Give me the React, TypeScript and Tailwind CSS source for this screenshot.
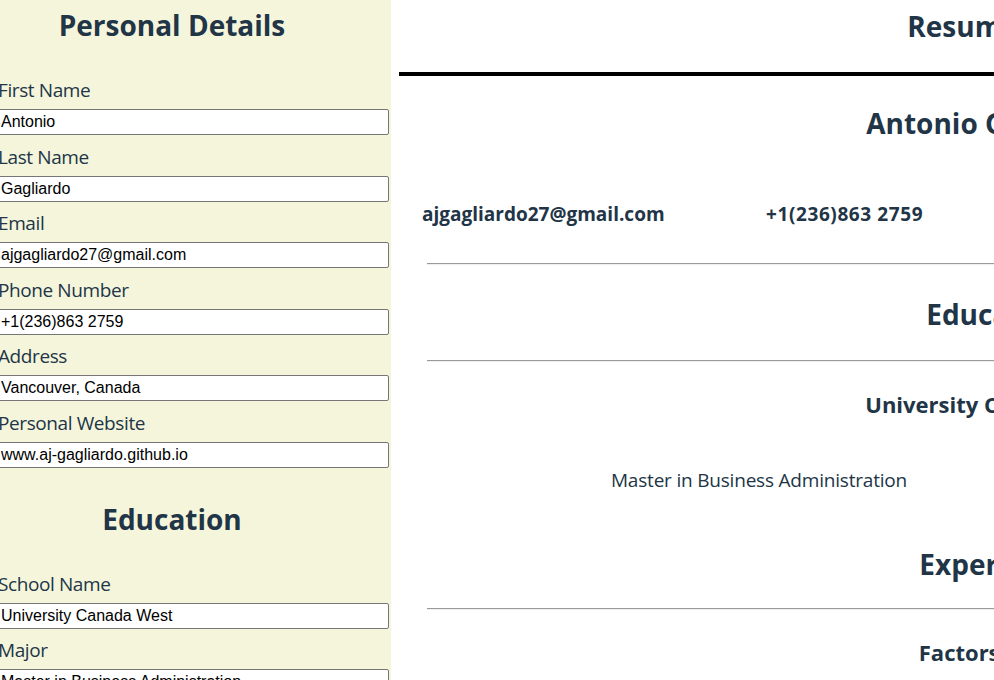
import { useState } from "react";

const personalFields = [
  { id: "firstName", label: "First Name", value: "Antonio" },
  { id: "lastName", label: "Last Name", value: "Gagliardo" },
  { id: "email", label: "Email", value: "ajgagliardo27@gmail.com" },
  { id: "phone", label: "Phone Number", value: "+1(236)863 2759" },
  { id: "address", label: "Address", value: "Vancouver, Canada" },
  { id: "website", label: "Personal Website", value: "www.aj-gagliardo.github.io" },
];

const educationFields = [
  { id: "school", label: "School Name", value: "University Canada West" },
  { id: "major", label: "Major", value: "Master in Business Administration" },
];

type Field = { id: string; label: string; value: string };

const FormField = ({ field }: { field: Field }) => {
  const [value, setValue] = useState(field.value);
  return (
    <div className="mb-[7.5px] flex flex-col">
      <label htmlFor={field.id} className="text-[19px] leading-[28px] tracking-[-0.4px]">
        {field.label}
      </label>
      <input
        id={field.id}
        className="mt-[5px] h-[26px] w-[391px] rounded-[2px] border border-[#767676] bg-white px-[2px] font-['Liberation_Sans',Arial,sans-serif] text-[16px] text-black"
        value={value}
        onChange={(e) => setValue(e.target.value)}
      />
    </div>
  );
};

const Divider = () => (
  <div className="ml-7 h-[2px] w-[1148px] border-t border-b border-t-[#9a9a9a] border-b-[#eeeeee]" />
);

export default function App() {
  return (
    <div className="flex h-[680px] w-[994px] overflow-hidden bg-white font-['Open_Sans',sans-serif] text-[#213547]">
      <aside className="w-[391px] shrink-0 bg-[#f5f5dc]">
        <div className="-ml-[2px] w-[391px]">
          <h2 className="w-[348px] pt-[5px] text-center text-[28px] font-bold leading-[40px]">
            Personal Details
          </h2>
          <div className="pt-[31px]">
            {personalFields.map((f) => (
              <FormField key={f.id} field={f} />
            ))}
          </div>
          <h2 className="w-[348px] pt-[23.5px] text-center text-[28px] font-bold leading-[40px]">
            Education
          </h2>
          <div className="pt-[31px]">
            {educationFields.map((f) => (
              <FormField key={f.id} field={f} />
            ))}
          </div>
        </div>
      </aside>

      <main className="w-[1200px] shrink-0 pl-2">
        <h1 className="w-[1128px] pt-[6px] text-center text-[28px] font-bold leading-[40px]">
          Resume
        </h1>
        <div className="mt-[26px] h-[4px] w-[1192px] bg-black" />

        <h2 className="ml-7 mt-[27px] w-[1132px] text-center text-[28px] font-bold leading-[40px]">
          Antonio Gagliardo
        </h2>
        <div className="mt-[57px] grid grid-cols-[344px_344px_344px_344px] pl-[23px] text-[19px] font-bold leading-[28px]">
          <span>ajgagliardo27@gmail.com</span>
          <span className="tracking-[0.6px]">+1(236)863 2759</span>
          <span>Vancouver, Canada</span>
          <span>www.aj-gagliardo.github.io</span>
        </div>

        <div className="mt-[35px]">
          <Divider />
        </div>
        <h2 className="ml-7 mt-[29px] w-[1138px] text-center text-[28px] font-bold leading-[40px]">
          Education
        </h2>
        <div className="mt-[26px]">
          <Divider />
        </div>
        <h3 className="ml-7 mt-[25.5px] w-[1138px] text-center text-[22px] font-bold leading-[32px]">
          University Canada West
        </h3>
        <div className="ml-7 mt-[46px] flex w-[1148px] text-[19px] leading-[28px] tracking-[-0.2px]">
          <p className="w-[664px] text-center">Master in Business Administration</p>
          <p className="flex-1 text-center">2023 - 2025</p>
        </div>

        <h2 className="ml-7 mt-[50px] w-[1138px] text-center text-[28px] font-bold leading-[40px]">
          Experience
        </h2>
        <div className="mt-[24px]">
          <Divider />
        </div>
        <h3 className="ml-7 mt-[26.5px] w-[1138px] text-center text-[22px] font-bold leading-[32px]">
          Factors Group
        </h3>
      </main>
    </div>
  );
}
